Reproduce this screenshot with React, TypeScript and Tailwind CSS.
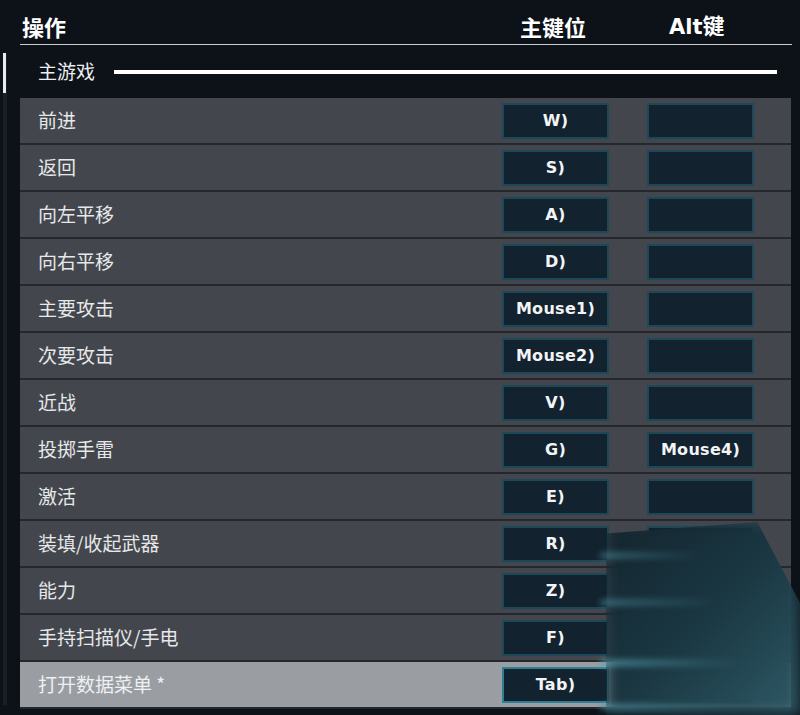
import React from 'react'

type Binding = {
  label: string
  primary: string
  alt?: string
  active?: boolean
}

const BINDINGS: Binding[] = [
  { label: '前进', primary: 'W)' },
  { label: '返回', primary: 'S)' },
  { label: '向左平移', primary: 'A)' },
  { label: '向右平移', primary: 'D)' },
  { label: '主要攻击', primary: 'Mouse1)' },
  { label: '次要攻击', primary: 'Mouse2)' },
  { label: '近战', primary: 'V)' },
  { label: '投掷手雷', primary: 'G)', alt: 'Mouse4)' },
  { label: '激活', primary: 'E)' },
  { label: '装填/收起武器', primary: 'R)' },
  { label: '能力', primary: 'Z)' },
  { label: '手持扫描仪/手电', primary: 'F)' },
  { label: '打开数据菜单 *', primary: 'Tab)', active: true },
]

const cjk = "font-['Noto_Sans_CJK_SC','Noto_Sans',sans-serif]"
const keyFont = "font-['DejaVu_Sans','Noto_Sans_CJK_SC',sans-serif]"

function KeyBox({ text, active }: { text?: string; active?: boolean }) {
  return (
    <div
      className={
        'w-[107px] h-[36px] flex items-center justify-center bg-[#12222e] border-2 ' +
        (active ? 'border-[#2e7f93]' : 'border-[#1c4858]')
      }
    >
      {text && (
        <span className={keyFont + ' text-[16px] font-bold text-[#f2f4f5] tracking-[0.3px]'}>{text}</span>
      )}
    </div>
  )
}

function Row({ b }: { b: Binding }) {
  return (
    <div
      className={
        'h-[47px] flex items-center border-b-2 border-[#24272b] ' +
        (b.active ? 'bg-[#9a9ea3]' : 'bg-[#43474d]')
      }
    >
      <div
        className={
          cjk +
          ' flex-1 pl-[18px] text-[19px] ' +
          (b.active ? 'text-[#eef0f2]' : 'text-[#e6e8ea]')
        }
      >
        {b.label}
      </div>
      <KeyBox text={b.primary} active={b.active} />
      <div className="w-[38px]" />
      <KeyBox text={b.alt} />
      <div className="w-[37px]" />
    </div>
  )
}

export default function App() {
  return (
    <div className="relative w-[800px] h-[715px] overflow-hidden bg-[#0d1219]">
      {/* header */}
      <div className="ml-[20px] w-[772px] h-[45px] flex items-end border-b border-[#c9cdd1]">
        <div className={cjk + ' flex-1 pl-[2px] pb-[1px] text-[22px] font-bold text-white'}>操作</div>
        <div className={cjk + ' w-[149px] pb-[1px] text-[22px] font-bold text-white'}>主键位</div>
        <div className={keyFont + ' w-[123px] pb-[1px] text-[21px] font-bold text-white'}>
          Alt<span className={cjk + ' text-[22px]'}>键</span>
        </div>
      </div>

      <div className="flex">
        {/* scrollbar */}
        <div className="ml-[3px] mt-[8px] w-[4px] h-[652px] bg-[#1a1f27] flex flex-col">
          <div className="h-[40px] w-[3px] bg-[#e9ecef]" />
        </div>

        <div className="ml-[13px] w-[771px]">
          <div className="h-[53px] flex items-center">
            <span className={cjk + ' pl-[18px] text-[19px] text-[#eceef0]'}>主游戏</span>
            <div className="ml-[19px] w-[663px] h-[4px] bg-white" />
          </div>
          {BINDINGS.map((b) => (
            <Row key={b.label} b={b} />
          ))}
        </div>
      </div>

      {/* light beams over the bottom-right corner */}
      <div className="pointer-events-none absolute left-[606px] top-[522px] w-[194px] h-[193px] blur-[7px] bg-gradient-to-br from-[#14252f] via-[#1a3742] to-[#2e5a66] [clip-path:polygon(0%_6%,78%_0%,100%_42%,100%_100%,0%_100%)]" />
      <div className="pointer-events-none absolute left-[600px] top-[553px] w-[100px] h-[5px] rounded-full blur-[3px] bg-gradient-to-r from-[#4a8c9c]/80 to-transparent" />
      <div className="pointer-events-none absolute left-[600px] top-[600px] w-[120px] h-[5px] rounded-full blur-[3px] bg-gradient-to-r from-[#4a8c9c]/80 to-transparent" />
      <div className="pointer-events-none absolute left-[600px] top-[660px] w-[140px] h-[6px] rounded-full blur-[3px] bg-gradient-to-r from-[#55a0b0]/85 to-transparent" />
      <div className="pointer-events-none absolute left-[600px] top-[704px] w-[150px] h-[6px] rounded-full blur-[3px] bg-gradient-to-r from-[#4a8c9c]/80 to-transparent" />
    </div>
  )
}
